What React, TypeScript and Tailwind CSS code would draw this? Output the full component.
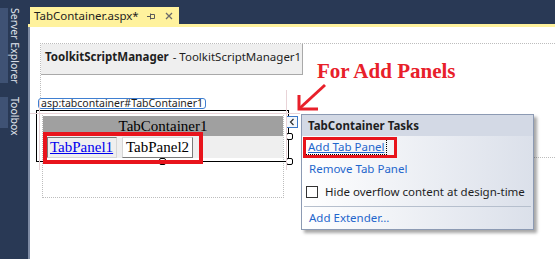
import React from 'react';

// ─── Left tool strip ──────────────────────────────────────────────────────────

function Sidebar() {
  return (
    <div className="flex w-[28px] shrink-0 flex-col bg-[#293955] pt-[8px]">
      <div className="flex items-start">
        <div className="h-[75px] w-[8px] bg-[#3f5274]" />
        <span className="whitespace-nowrap text-[10.5px] leading-[14px] text-[#e2e6ee] [writing-mode:vertical-rl]">Server Explorer</span>
      </div>
      <div className="mt-[13px] flex items-start">
        <div className="h-[31px] w-[8px] bg-[#3f5274]" />
        <span className="whitespace-nowrap text-[10.5px] leading-[14px] text-[#e2e6ee] [writing-mode:vertical-rl]">Toolbox</span>
      </div>
    </div>
  );
}

// ─── Document tab ─────────────────────────────────────────────────────────────

function TitleBar() {
  return (
    <div className="flex h-[24px] items-end bg-[#293955] pl-[2px]">
      <div className="flex h-[17px] w-[149px] items-center whitespace-nowrap bg-[#fff29d] pl-[4px] text-[11.5px] leading-none text-[#1e1e1e]">
        <span>TabContainer.aspx*</span>
        <svg className="ml-auto" width="8" height="8" viewBox="0 0 8 8">
          <path d="M0 4.5H3M3.5 1.5V7.5M3.5 2.5H7.5V6.5H3.5" fill="none" stroke="#5a5a5a" strokeWidth="1" />
        </svg>
        <svg className="ml-[10px] mr-[6px]" width="8" height="8" viewBox="0 0 8 8">
          <path d="M1 1L7 7M7 1L1 7" stroke="#6a6a6a" strokeWidth="1.3" />
        </svg>
      </div>
    </div>
  );
}

// ─── Small selection handle ───────────────────────────────────────────────────

function Handle({ className }: { className: string }) {
  return <div className={`absolute h-[7px] w-[7px] rounded-[2px] border border-black bg-white ${className}`} />;
}

// ─── Design surface ───────────────────────────────────────────────────────────

function Canvas() {
  return (
    <div className="relative flex-1 border-l-2 border-[#7d8aa3] bg-white">
      {/* ToolkitScriptManager */}
      <div className="ml-[10px] mt-[16px] h-[55px] border-l border-t border-dotted border-[#bdbdbd]">
        <div className="flex h-[31px] w-[262px] items-start whitespace-nowrap border-b border-r border-[#a9a9a9] bg-[#efefef] pl-[4px] pt-[6px] text-[11.5px] leading-[14px] text-[#1e1e1e]">
          <span className="font-bold">ToolkitScriptManager</span>
          <span className="ml-[4px]">- ToolkitScriptManager1</span>
        </div>
      </div>

      {/* TabContainer */}
      <div className="relative ml-[6px] w-[253px]">
        <div className="flex">
          <div className="ml-[2px] flex h-[11px] items-center whitespace-nowrap rounded-[3px] border border-[#3f7fd1] bg-white px-[2px] text-[10.5px] leading-none text-[#1e1e1e]">
            asp:tabcontainer#TabContainer1
          </div>
        </div>
        <div className="ml-[6px] mt-[4px] h-[85px] w-[242px] border border-dotted border-[#bdbdbd]">
          <div className="mt-[2px] h-[20px] bg-[#a0a0a0] text-center font-['Liberation_Serif',serif] text-[15px] leading-[21px] text-black">
            TabContainer1
          </div>
          <div className="flex h-[22px] items-start gap-[5px] bg-[#efefef] pl-[4px] pt-[1px] font-['Liberation_Serif',serif] text-[15px] leading-[19px]">
            <div className="h-[21px] w-[70px] whitespace-nowrap border border-[#7a7a7a] border-b-[#d6d6d6] border-r-[#d6d6d6] pl-[2px] text-[#0000ee] underline">
              TabPanel1
            </div>
            <div className="h-[21px] w-[71px] whitespace-nowrap border border-[#d6d6d6] border-b-[#7a7a7a] border-r-[#7a7a7a] bg-white pl-[3px] text-black">
              TabPanel2
            </div>
          </div>
        </div>

        {/* selection outline + handles */}
        <div className="absolute left-0 top-[12px] h-[52px] w-[253px] border border-black" />
        <Handle className="left-[250px] top-[35px]" />
        <Handle className="left-[250px] top-[60px]" />
        <Handle className="left-[123px] top-[60px]" />

        {/* smart tag */}
        <div className="absolute left-[250px] top-[18px] flex h-[12px] w-[12px] items-center justify-center border border-[#3c78c8] bg-[#f4f7fb]">
          <svg width="6" height="8" viewBox="0 0 6 8">
            <path d="M4.5 1L1.5 4L4.5 7" fill="none" stroke="#2b2b2b" strokeWidth="1.2" />
          </svg>
        </div>
      </div>
    </div>
  );
}

// ─── Smart tag popup ──────────────────────────────────────────────────────────

function TasksPanel() {
  return (
    <div className="absolute left-[301px] top-[114px] w-[233px] whitespace-nowrap border border-[#8c9ab3] text-[11.5px] leading-[14px] shadow-[3px_3px_3px_rgba(0,0,0,0.35)]">
      <div className="flex h-[21px] items-center bg-[#d3d9e5] pl-[6px] font-bold text-[#1e1e1e]">TabContainer Tasks</div>
      <div className="bg-gradient-to-r from-white to-[#dbe0ea]">
        <div className="flex h-[22px] items-center pl-[3px]">
          <span className="border border-dotted border-black px-[2px] text-[#1f66cc] underline">Add Tab Panel</span>
        </div>
        <div className="flex h-[22px] items-center pl-[7px] text-[#1f66cc]">Remove Tab Panel</div>
        <div className="flex h-[23px] items-center pl-[4px] text-[#1e1e1e]">
          <div className="h-[12px] w-[12px] border border-[#333333] bg-white" />
          <span className="ml-[7px]">Hide overflow content at design-time</span>
        </div>
        <div className="mx-[2px] mt-[3px] h-px bg-[#b6bfcd]" />
        <div className="flex h-[22px] items-center pl-[7px] text-[#1f66cc]">Add Extender...</div>
      </div>
    </div>
  );
}

export default function App() {
  return (
    <div className="relative flex h-[259px] w-[555px] overflow-hidden bg-white font-['Noto_Sans',sans-serif]">
      <Sidebar />
      <div className="flex flex-1 flex-col">
        <TitleBar />
        <div className="h-[3px] bg-[#fff29d]" />
        <Canvas />
      </div>

      {/* designer guide lines */}
      <div className="absolute left-[30px] top-[113px] h-px w-[270px] bg-[#e8d3d7]" />
      <div className="absolute left-[39px] top-[100px] h-[70px] w-px bg-[#e8d3d7]" />
      <div className="absolute left-[286px] top-[90px] h-[80px] w-px bg-[#e8d3d7]" />
      <div className="absolute left-[534px] top-[157px] w-[21px] border-t border-dotted border-[#bdbdbd]" />

      <TasksPanel />

      {/* annotations */}
      <div className="absolute left-[317px] top-[61px] whitespace-nowrap font-['Liberation_Serif',serif] text-[21px] font-bold leading-none text-[#e8202a]">
        For Add Panels
      </div>
      <svg className="absolute left-[295px] top-[82px]" width="36" height="30" viewBox="0 0 36 30">
        <path d="M30 3L5 26" stroke="#e8202a" strokeWidth="3" />
        <path d="M4 13V27H23" fill="none" stroke="#e8202a" strokeWidth="3" />
      </svg>
      <div className="absolute left-[43px] top-[132px] h-[32px] w-[160px] border-4 border-[#e8141c]" />
      <div className="absolute left-[303px] top-[137px] h-[21px] w-[94px] border-[3px] border-[#e8141c]" />
    </div>
  );
}
